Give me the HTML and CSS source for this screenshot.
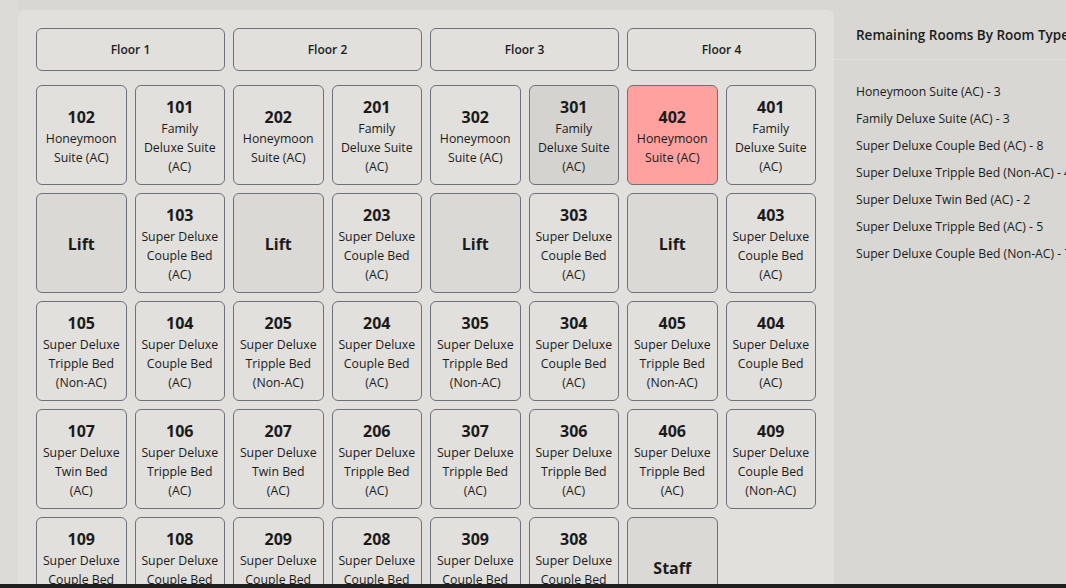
FILE: index.html
```html
<!DOCTYPE html>
<html lang="en">
<head>
<meta charset="utf-8">
<title>Rooms</title>
<link rel="stylesheet" href="styles.css">
</head>
<body>
<div class="app">
  <div class="edge"></div>
  <main class="board">
    <div class="floors">
      <button class="floor">Floor 1</button>
      <button class="floor">Floor 2</button>
      <button class="floor">Floor 3</button>
      <button class="floor">Floor 4</button>
    </div>
    <div class="rooms">
      <div class="room"><b>102</b><span>Honeymoon<br>Suite (AC)</span></div>
      <div class="room"><b>101</b><span>Family<br>Deluxe Suite<br>(AC)</span></div>
      <div class="room"><b>202</b><span>Honeymoon<br>Suite (AC)</span></div>
      <div class="room"><b>201</b><span>Family<br>Deluxe Suite<br>(AC)</span></div>
      <div class="room"><b>302</b><span>Honeymoon<br>Suite (AC)</span></div>
      <div class="room room-held"><b>301</b><span>Family<br>Deluxe Suite<br>(AC)</span></div>
      <div class="room room-booked"><b>402</b><span>Honeymoon<br>Suite (AC)</span></div>
      <div class="room"><b>401</b><span>Family<br>Deluxe Suite<br>(AC)</span></div>

      <div class="room room-util"><b>Lift</b></div>
      <div class="room"><b>103</b><span>Super Deluxe<br>Couple Bed<br>(AC)</span></div>
      <div class="room room-util"><b>Lift</b></div>
      <div class="room"><b>203</b><span>Super Deluxe<br>Couple Bed<br>(AC)</span></div>
      <div class="room room-util"><b>Lift</b></div>
      <div class="room"><b>303</b><span>Super Deluxe<br>Couple Bed<br>(AC)</span></div>
      <div class="room room-util"><b>Lift</b></div>
      <div class="room"><b>403</b><span>Super Deluxe<br>Couple Bed<br>(AC)</span></div>

      <div class="room"><b>105</b><span>Super Deluxe<br>Tripple Bed<br>(Non-AC)</span></div>
      <div class="room"><b>104</b><span>Super Deluxe<br>Couple Bed<br>(AC)</span></div>
      <div class="room"><b>205</b><span>Super Deluxe<br>Tripple Bed<br>(Non-AC)</span></div>
      <div class="room"><b>204</b><span>Super Deluxe<br>Couple Bed<br>(AC)</span></div>
      <div class="room"><b>305</b><span>Super Deluxe<br>Tripple Bed<br>(Non-AC)</span></div>
      <div class="room"><b>304</b><span>Super Deluxe<br>Couple Bed<br>(AC)</span></div>
      <div class="room"><b>405</b><span>Super Deluxe<br>Tripple Bed<br>(Non-AC)</span></div>
      <div class="room"><b>404</b><span>Super Deluxe<br>Couple Bed<br>(AC)</span></div>

      <div class="room"><b>107</b><span>Super Deluxe<br>Twin Bed<br>(AC)</span></div>
      <div class="room"><b>106</b><span>Super Deluxe<br>Tripple Bed<br>(AC)</span></div>
      <div class="room"><b>207</b><span>Super Deluxe<br>Twin Bed<br>(AC)</span></div>
      <div class="room"><b>206</b><span>Super Deluxe<br>Tripple Bed<br>(AC)</span></div>
      <div class="room"><b>307</b><span>Super Deluxe<br>Tripple Bed<br>(AC)</span></div>
      <div class="room"><b>306</b><span>Super Deluxe<br>Tripple Bed<br>(AC)</span></div>
      <div class="room"><b>406</b><span>Super Deluxe<br>Tripple Bed<br>(AC)</span></div>
      <div class="room"><b>409</b><span>Super Deluxe<br>Couple Bed<br>(Non-AC)</span></div>

      <div class="room"><b>109</b><span>Super Deluxe<br>Couple Bed<br>(AC)</span></div>
      <div class="room"><b>108</b><span>Super Deluxe<br>Couple Bed<br>(AC)</span></div>
      <div class="room"><b>209</b><span>Super Deluxe<br>Couple Bed<br>(AC)</span></div>
      <div class="room"><b>208</b><span>Super Deluxe<br>Couple Bed<br>(AC)</span></div>
      <div class="room"><b>309</b><span>Super Deluxe<br>Couple Bed<br>(AC)</span></div>
      <div class="room"><b>308</b><span>Super Deluxe<br>Couple Bed<br>(AC)</span></div>
      <div class="room room-util"><b>Staff</b></div>
    </div>
  </main>
  <aside class="summary">
    <h2 class="summary-title">Remaining Rooms By Room Type</h2>
    <ul class="summary-list">
      <li>Honeymoon Suite (AC) - 3</li>
      <li>Family Deluxe Suite (AC) - 3</li>
      <li>Super Deluxe Couple Bed (AC) - 8</li>
      <li>Super Deluxe Tripple Bed (Non-AC) - 4</li>
      <li>Super Deluxe Twin Bed (AC) - 2</li>
      <li>Super Deluxe Tripple Bed (AC) - 5</li>
      <li>Super Deluxe Couple Bed (Non-AC) - 7</li>
    </ul>
  </aside>
</div>
<div class="taskbar"></div>
</body>
</html>
```
FILE: styles.css
```css
* { box-sizing: border-box; }
html, body { margin: 0; padding: 0; }
body {
  width: 1066px;
  height: 588px;
  overflow: hidden;
  background: #d8d7d3;
  font-family: "Open Sans", "Noto Sans", sans-serif;
  color: #1b1b1b;
  display: flex;
  flex-direction: column;
}
.app {
  height: 584px;
  display: flex;
  overflow: hidden;
}
.edge {
  width: 18px;
  flex: none;
  background: #dcdbd8;
}
.board {
  width: 816px;
  flex: none;
  margin-top: 10px;
  padding: 18px 18px 0;
  background: #e1e0dd;
  border-radius: 6px 6px 0 0;
}
.floors {
  display: grid;
  grid-template-columns: repeat(4, 1fr);
  gap: 8px;
}
.floor {
  height: 43px;
  border: 1px solid #6d717a;
  border-radius: 6px;
  background: #e1e0dd;
  font-family: inherit;
  font-size: 12px;
  font-weight: 600;
  color: #1b1b1b;
  padding: 0;
}
.rooms {
  margin-top: 14px;
  display: grid;
  grid-template-columns: repeat(8, 1fr);
  grid-auto-rows: 100px;
  gap: 8px;
}
.room {
  border: 1px solid #6d717a;
  border-radius: 6px;
  background: #e1e0dd;
  display: flex;
  flex-direction: column;
  align-items: center;
  justify-content: center;
  text-align: center;
  padding: 1px 2px 0;
  white-space: nowrap;
}
.room b {
  font-size: 16px;
  line-height: 24px;
  font-weight: 700;
}
.room span {
  font-size: 12.3px;
  line-height: 19px;
}
.room-held { background: #d5d3cf; }
.room-booked { background: #ffa19f; }
.room-util { background: #dbd9d6; }
.summary {
  flex: 1;
  min-width: 0;
  overflow: hidden;
}
.summary-title {
  margin: 0;
  padding: 25px 0 14px 22px;
  font-size: 13.5px;
  font-weight: 600;
  line-height: 20px;
  white-space: nowrap;
  border-bottom: 1px solid #dfdedb;
}
.summary-list {
  list-style: none;
  margin: 0;
  padding: 18px 0 0 22px;
}
.summary-list li {
  font-size: 12.2px;
  line-height: 27px;
  white-space: nowrap;
}
.taskbar {
  height: 4px;
  background: #1f1f1f;
}
```
